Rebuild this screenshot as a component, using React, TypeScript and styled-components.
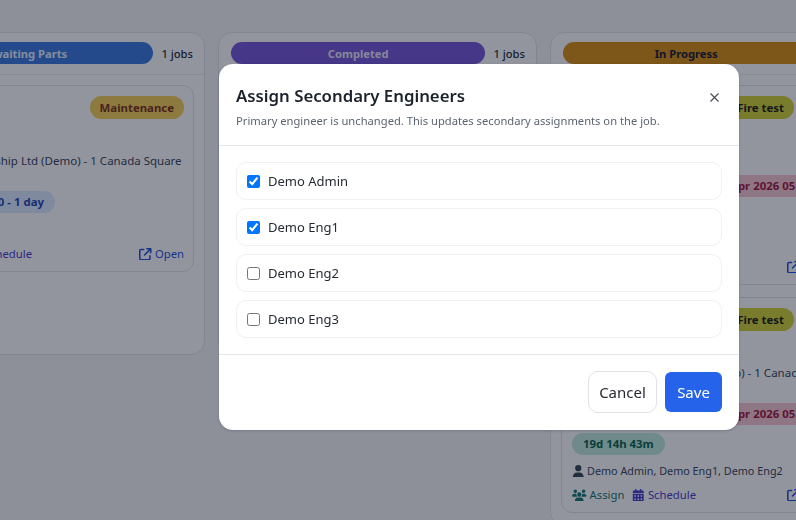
import React from "react";
import styled, { createGlobalStyle } from "styled-components";
import { FaUsers, FaCalendarDays, FaUser, FaArrowUpRightFromSquare } from "react-icons/fa6";

const Global = createGlobalStyle`
  html, body { margin: 0; height: 100%; overflow: hidden; background: #f6f5f4; }
  body { font-family: "Noto Sans", "Open Sans", sans-serif; color: #0f172a; }
  #root { height: 100%; }
`;

const Board = styled.main`
  display: flex;
  align-items: flex-start;
  gap: 13px;
  width: 1100px;
  margin-left: -114px;
  padding-top: 32px;
`;
const Column = styled.section`
  flex: 0 0 319px;
  min-width: 0;
  box-sizing: border-box;
  min-height: 323px;
  border: 1px solid #dfe2e8;
  border-radius: 14px;
  background: #fffefd;
`;
const ColumnHead = styled.header`
  display: flex;
  align-items: flex-start;
  gap: 8px;
  height: 42px;
  box-sizing: border-box;
  padding: 9px 11px 0 12px;
  border-bottom: 1px solid #ebedf1;
`;
const StagePill = styled.div<{ $bg: string; $fg: string; $trail?: number }>`
  flex: 1;
  height: 22px;
  margin-right: ${(p) => p.$trail ?? 0}px;
  border-radius: 11px;
  background: ${(p) => p.$bg};
  color: ${(p) => p.$fg};
  font-size: 11.2px;
  font-weight: 700;
  line-height: 23px;
  text-align: center;
`;
const JobCount = styled.span`
  font-size: 11.2px;
  font-weight: 500;
  line-height: 23px;
  color: #1e293b;
  white-space: nowrap;
`;
const Cards = styled.div<{ $right?: number }>`
  display: flex;
  flex-direction: column;
  gap: 12px;
  padding: 10px ${(p) => p.$right ?? 10}px 12px 10px;
`;
const Card = styled.article`
  box-sizing: border-box;
  display: flex;
  flex-direction: column;
  padding: 10px 9px 9px 10px;
  border: 1px solid #dfe2e8;
  border-radius: 11px;
  background: #fffefd;
  overflow: hidden;
`;
const TagRow = styled.div<{ $inset?: number }>`
  display: flex;
  justify-content: flex-end;
  padding-right: ${(p) => p.$inset ?? 0}px;
`;
const Tag = styled.span<{ $bg: string; $fg: string }>`
  height: 23px;
  padding: 0 10px;
  border-radius: 12px;
  background: ${(p) => p.$bg};
  color: ${(p) => p.$fg};
  font-size: 11.4px;
  font-weight: 700;
  line-height: 23px;
`;
const Line = styled.div<{ $top: number; $left?: number }>`
  margin-top: ${(p) => p.$top}px;
  margin-left: ${(p) => p.$left ?? 0}px;
  font-size: 11.5px;
  line-height: 16px;
  color: #334155;
  white-space: nowrap;
`;
const Chip = styled.span<{ $bg: string; $fg: string; $top: number; $left?: number }>`
  align-self: flex-start;
  margin-top: ${(p) => p.$top}px;
  margin-left: ${(p) => p.$left ?? 0}px;
  height: 22px;
  padding: 0 11px;
  border-radius: 11px;
  background: ${(p) => p.$bg};
  color: ${(p) => p.$fg};
  font-size: 11.4px;
  font-weight: 700;
  line-height: 22px;
  white-space: nowrap;
`;
const People = styled.div<{ $top: number }>`
  display: flex;
  align-items: center;
  gap: 2.5px;
  margin-top: ${(p) => p.$top}px;
  font-size: 10.8px;
  line-height: 16px;
  color: #334155;
  white-space: nowrap;
  svg { font-size: 12.5px; }
`;
const Actions = styled.div<{ $top: number }>`
  display: flex;
  align-items: center;
  justify-content: space-between;
  margin-top: ${(p) => p.$top}px;
`;
const ActionGroup = styled.div`
  display: flex;
  gap: 8px;
`;
const Action = styled.a<{ $color: string; $icon?: number }>`
  display: inline-flex;
  align-items: center;
  gap: 3px;
  color: ${(p) => p.$color};
  font-size: 11.3px;
  line-height: 16px;
  svg { font-size: ${(p) => p.$icon ?? 12.5}px; }
`;

const Backdrop = styled.div`
  position: fixed;
  inset: 0;
  background: rgba(15, 23, 42, 0.45);
`;
const Modal = styled.div`
  position: absolute;
  left: 219px;
  top: 64px;
  width: 520px;
  height: 366px;
  box-sizing: border-box;
  display: flex;
  flex-direction: column;
  border-radius: 14px;
  background: #fff;
  box-shadow: 0 1px 3px rgba(15, 23, 42, 0.2);
`;
const ModalHead = styled.header`
  position: relative;
  height: 82px;
  box-sizing: border-box;
  padding: 20px 17px 0;
  border-bottom: 1px solid #e2e5e9;
`;
const Title = styled.h2`
  margin: 0;
  font-size: 16.8px;
  font-weight: 600;
  line-height: 24px;
  color: #1c222c;
`;
const Subtitle = styled.p`
  margin: 5px 0 0;
  font-size: 11.2px;
  line-height: 16px;
  color: #5b6470;
`;
const Close = styled.button`
  position: absolute;
  top: 29px;
  right: 20px;
  display: flex;
  padding: 0;
  border: 0;
  background: none;
  color: #4b4f55;
`;
const ModalBody = styled.div`
  display: flex;
  flex-direction: column;
  gap: 8px;
  height: 209px;
  box-sizing: border-box;
  padding: 16px 17px 0;
  border-bottom: 1px solid #e2e5e9;
`;
const Option = styled.label`
  display: flex;
  align-items: center;
  gap: 8px;
  height: 38px;
  box-sizing: border-box;
  padding: 0 10px;
  border: 1px solid #f0f1f4;
  border-radius: 10px;
  color: #262b33;
  font-size: 13px;
`;
const Check = styled.input`
  width: 13px;
  height: 13px;
  margin: 0;
`;
const ModalFoot = styled.footer`
  display: flex;
  flex: 1;
  align-items: flex-start;
  justify-content: flex-end;
  gap: 8px;
  padding: 16px 17px 0;
`;
const Cancel = styled.button`
  width: 69px;
  height: 42px;
  border: 1px solid #dfe2e6;
  border-radius: 10px;
  background: #fff;
  color: #262b33;
  font: 15px "Noto Sans", sans-serif;
`;
const Save = styled.button`
  width: 57px;
  height: 40px;
  margin-top: 1px;
  border: 0;
  border-radius: 6px;
  background: #2563eb;
  color: #fff;
  font: 15px "Noto Sans", sans-serif;
`;

const indigo = "#4338ca";
const teal = "#0f766e";
const link = "#1d4ed8";
const client = "Demo Partnership Ltd (Demo) - 1 Canada Square";

const engineers: [string, boolean][] = [
  ["Demo Admin", true],
  ["Demo Eng1", true],
  ["Demo Eng2", false],
  ["Demo Eng3", false],
];

const inProgress = [
  { chipTop: 56, address: false, people: "Demo Admin" },
  { chipTop: 22, address: true, people: "Demo Admin, Demo Eng1, Demo Eng2" },
];

export default function App() {
  return (
    <>
      <Global />
      <Board>
        <Column>
          <ColumnHead>
            <StagePill $bg="#3575dd" $fg="#e6edf9">Awaiting Parts</StagePill>
            <JobCount>1 jobs</JobCount>
          </ColumnHead>
          <Cards>
            <Card>
              <TagRow>
                <Tag $bg="#f2cc50" $fg="#7c2d12">Maintenance</Tag>
              </TagRow>
              <Line $top={34} $left={11}>{client}</Line>
              <Chip $bg="#dbeafe" $fg="#1e40af" $top={22} $left={1}>01 Apr 26 09:00 - 1 day</Chip>
              <Actions $top={33}>
                <ActionGroup>
                  <Action $color={teal} $icon={14.5}><FaUsers />Assign</Action>
                  <Action $color={indigo}><FaCalendarDays />Schedule</Action>
                </ActionGroup>
                <Action $color={link}><FaArrowUpRightFromSquare />Open</Action>
              </Actions>
            </Card>
          </Cards>
        </Column>
        <Column>
          <ColumnHead>
            <StagePill $bg="#7353d6" $fg="#e6e2f5">Completed</StagePill>
            <JobCount>1 jobs</JobCount>
          </ColumnHead>
        </Column>
        <Column>
          <ColumnHead>
            <StagePill $bg="#d88a0c" $fg="#0f172a" $trail={8}>In Progress</StagePill>
            <JobCount>2 jobs</JobCount>
          </ColumnHead>
          <Cards $right={26}>
            {inProgress.map((job, i) => (
              <Card key={i}>
                <TagRow $inset={38}>
                  <Tag $bg="#cfcf30" $fg="#1a1a0a">Fire test</Tag>
                </TagRow>
                {job.address && <Line $top={34} $left={11}>{client}</Line>}
                <Chip $bg="#f8c5cf" $fg="#9f1239" $top={job.chipTop} $left={147}>Apr 2026 05:30</Chip>
                <Chip $bg="#bfeadb" $fg="#065f46" $top={8}>19d 14h 43m</Chip>
                <People $top={8}><FaUser />{job.people}</People>
                <Actions $top={8}>
                  <ActionGroup>
                    <Action $color={teal} $icon={14.5}><FaUsers />Assign</Action>
                    <Action $color={indigo}><FaCalendarDays />Schedule</Action>
                  </ActionGroup>
                  <Action $color={link}><FaArrowUpRightFromSquare />Open</Action>
                </Actions>
              </Card>
            ))}
          </Cards>
        </Column>
      </Board>
      <Backdrop>
        <Modal>
          <ModalHead>
            <Title>Assign Secondary Engineers</Title>
            <Subtitle>Primary engineer is unchanged. This updates secondary assignments on the job.</Subtitle>
            <Close aria-label="Close">
              <svg width="9" height="9" viewBox="0 0 9 9">
                <path d="M0.5 0.5 L8.5 8.5 M8.5 0.5 L0.5 8.5" stroke="currentColor" strokeWidth="1.2" fill="none" />
              </svg>
            </Close>
          </ModalHead>
          <ModalBody>
            {engineers.map(([name, on]) => (
              <Option key={name}>
                <Check type="checkbox" defaultChecked={on} />
                {name}
              </Option>
            ))}
          </ModalBody>
          <ModalFoot>
            <Cancel>Cancel</Cancel>
            <Save>Save</Save>
          </ModalFoot>
        </Modal>
      </Backdrop>
    </>
  );
}
